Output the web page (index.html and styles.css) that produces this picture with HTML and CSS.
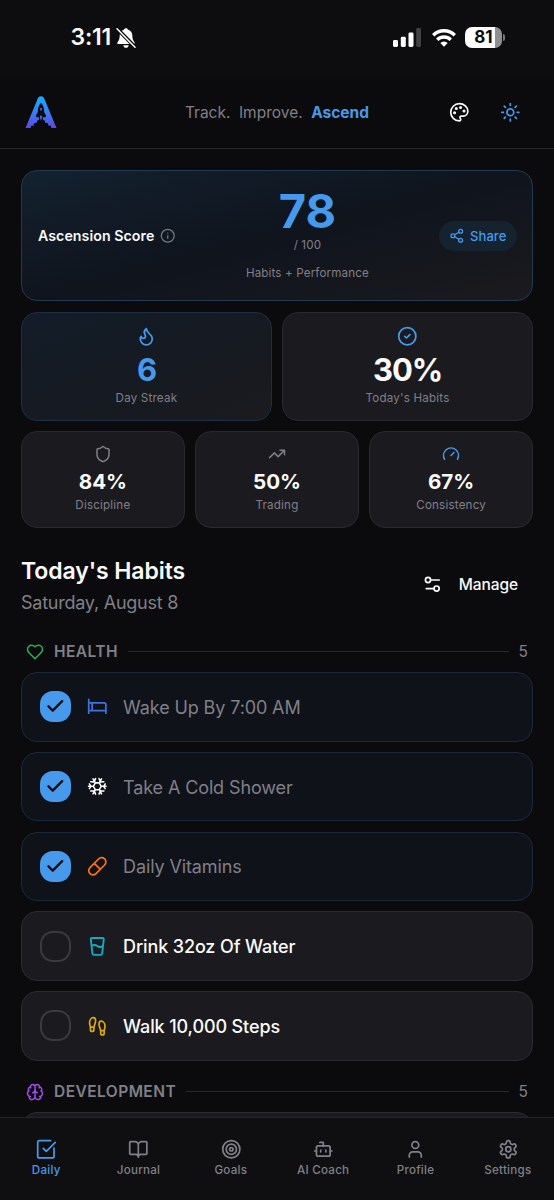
FILE: index.html
```html
<!DOCTYPE html>
<html lang="en">
<head>
<meta charset="utf-8">
<title>Ascend</title>
<link rel="stylesheet" href="styles.css">
</head>
<body>
<div class="app">
  <div class="status">
    <div class="status-left">
      <span class="clock">3:11</span>
      <svg class="bell" viewBox="0 0 20 22"><path fill="#fff" d="M10 1.200c.9 0 1.600.5 1.800 1.300C14.700 3.300 16.300 5.700 16.300 8.600c0 3.700.9 5 2 6.300.8.9.4 2.100-.9 2.100H2.600c-1.300 0-1.700-1.200-.9-2.100 1.100-1.300 2-2.600 2-6.300 0-2.900 1.600-5.300 4.500-6.100C8.400 1.700 9.100 1.200 10 1.200zM7.300 18.200h5.400c-.2 1.600-1.300 2.600-2.700 2.600s-2.500-1-2.700-2.600z"/><path stroke="#0c0c0e" stroke-width="3.800" d="M1 1.500l18 18.500"/><path stroke="#fff" stroke-width="1.500" stroke-linecap="round" d="M1 1.800l18 18.500"/></svg>
    </div>
    <div class="status-right">
      <svg class="signal" viewBox="0 0 28 19"><rect x="0" y="12" width="5" height="7" rx="1.400" fill="#fff"/><rect x="7.800" y="8.800" width="5" height="10.200" rx="1.400" fill="#fff"/><rect x="15.500" y="4.500" width="5" height="14.500" rx="1.400" fill="#fff"/><rect x="23.200" y="0" width="4.800" height="19" rx="1.400" fill="#414143"/></svg>
      <svg class="wifi" viewBox="0 0 24 19"><g fill="none" stroke="#fff" stroke-width="3.400"><path d="M1.200 7.200a15.500 15.500 0 0 1 21.600 0"/><path d="M5.200 11.800a9.800 9.800 0 0 1 13.600 0"/></g><path fill="#fff" d="M12 18.800l-3.700-3.700a5.300 5.300 0 0 1 7.400 0z"/></svg>
      <div class="battery"><span>81</span></div><i class="battery-cap"></i>
    </div>
  </div>

  <header class="header">
    <svg class="logo" viewBox="0 0 32 34"><defs><linearGradient id="lg" x1="0" y1="0" x2="0" y2="1"><stop offset="0" stop-color="#13b0fb"/><stop offset=".55" stop-color="#3d78f4"/><stop offset="1" stop-color="#5f48dc"/></linearGradient></defs><path fill="url(#lg)" d="M12.800 3.600C13.500 2 14.500 1.200 16 1.200s2.500.8 3.200 2.400L31.500 33h-5.200l-.5-2.200h-2.300l-.6-2.600-2.600-.4-.9-2.600-1.600-.4.200-2.600h2.600l.5-1.800-1.900-3.200c0-4-.9-6.800-3.200-9.400-2.300 2.600-3.200 5.400-3.200 9.400l-1.900 3.200.5 1.800H14l.2 2.600-1.600.4-.9 2.600-2.600.4-.6 2.600H6.200L5.700 33H.5z"/><path fill="#3d6ff0" d="M14.900 20.800h2.200l-.4 3.600h-1.400zM15.200 13h1.600v2.400h-1.600z"/></svg>
    <div class="tagline"><span>Track.</span><span>Improve.</span><b>Ascend</b></div>
    <div class="header-actions">
      <svg class="ic palette" viewBox="0 0 24 24"><circle cx="13.500" cy="6.500" r=".8" fill="currentColor"/><circle cx="17.500" cy="10.500" r=".8" fill="currentColor"/><circle cx="8.500" cy="7.500" r=".8" fill="currentColor"/><circle cx="6.500" cy="12.500" r=".8" fill="currentColor"/><path d="M12 2C6.500 2 2 6.500 2 12s4.500 10 10 10c.926 0 1.648-.746 1.648-1.688 0-.437-.18-.835-.437-1.125-.29-.289-.438-.652-.438-1.125a1.640 1.640 0 0 1 1.668-1.668h1.996c3.051 0 5.555-2.503 5.555-5.554C21.965 6.012 17.461 2 12 2z"/></svg>
      <svg class="ic sun" viewBox="0 0 24 24"><circle cx="12" cy="12" r="4"/><path d="M12 2v2M12 20v2M4.930 4.930l1.410 1.410M17.660 17.660l1.410 1.410M2 12h2M20 12h2M6.340 17.660l-1.410 1.410M19.070 4.930l-1.410 1.410"/></svg>
    </div>
  </header>

  <main class="main">
    <section class="hero">
      <div class="hero-title">Ascension Score<svg class="ic" viewBox="0 0 24 24"><circle cx="12" cy="12" r="10"/><path d="M12 16v-4M12 8h.01"/></svg></div>
      <div class="hero-score"><div class="score">78</div><div class="of">/ 100</div><div class="sub">Habits + Performance</div></div>
      <div class="hero-side"><div class="share"><svg class="ic" viewBox="0 0 24 24"><circle cx="18" cy="5" r="3"/><circle cx="6" cy="12" r="3"/><circle cx="18" cy="19" r="3"/><path d="M8.590 13.510l6.830 3.980M15.410 6.510l-6.820 3.980"/></svg>Share</div></div>
    </section>

    <div class="grid two">
      <div class="card streak"><svg class="ic" viewBox="0 0 24 24"><path d="M8.500 14.500A2.500 2.500 0 0 0 11 12c0-1.380-.5-2-1-3-1.072-2.143-.224-4.054 2-6 .5 2.500 2 4.900 4 6.500 2 1.600 3 3.500 3 5.500a7 7 0 1 1-14 0c0-1.153.433-2.294 1-3a2.500 2.500 0 0 0 2.500 2.500z"/></svg><strong>6</strong><span>Day Streak</span></div>
      <div class="card"><svg class="ic blue" viewBox="0 0 24 24"><circle cx="12" cy="12" r="10"/><path d="M9 12l2 2 4-4"/></svg><strong>30%</strong><span>Today's Habits</span></div>
    </div>
    <div class="grid three">
      <div class="card"><svg class="ic" viewBox="0 0 24 24"><path d="M20 13c0 5-3.500 7.500-7.660 8.950a1 1 0 0 1-.67-.01C7.500 20.500 4 18 4 13V6a1 1 0 0 1 1-1c2 0 4.500-1.200 6.240-2.720a1.170 1.170 0 0 1 1.520 0C14.510 3.810 17 5 19 5a1 1 0 0 1 1 1z"/></svg><strong>84%</strong><span>Discipline</span></div>
      <div class="card"><svg class="ic" viewBox="0 0 24 24"><path d="M22 7l-8.500 8.500-5-5L2 17M16 7h6v6"/></svg><strong>50%</strong><span>Trading</span></div>
      <div class="card"><svg class="ic blue" viewBox="0 0 24 24"><path d="M12 14l4-4M3.340 19a10 10 0 1 1 17.320 0"/></svg><strong>67%</strong><span>Consistency</span></div>
    </div>

    <div class="heading">
      <div><h1>Today's Habits</h1><p>Saturday, August 8</p></div>
      <div class="manage"><svg class="ic" viewBox="0 0 24 24"><path d="M20 7h-9M14 17H5"/><circle cx="17" cy="17" r="3"/><circle cx="7" cy="7" r="3"/></svg>Manage</div>
    </div>

    <div class="section"><svg class="ic green" viewBox="0 0 24 24"><path d="M19 14c1.490-1.460 3-3.210 3-5.500A5.500 5.500 0 0 0 16.500 3c-1.760 0-3 .5-4.500 2-1.500-1.500-2.740-2-4.500-2A5.500 5.500 0 0 0 2 8.500c0 2.300 1.500 4.050 3 5.500l7 7Z"/></svg><h2>HEALTH</h2><hr><em>5</em></div>

    <div class="habits">
      <div class="habit done"><div class="check"><svg class="ic" viewBox="0 0 24 24"><path d="M20 6L9 17l-5-5"/></svg></div><svg class="ic bed" viewBox="0 0 24 24"><path d="M2 4v16M2 8h18a2 2 0 0 1 2 2v10M2 17h20M6 8v9"/></svg><span>Wake Up By 7:00 AM</span></div>
      <div class="habit done"><div class="check"><svg class="ic" viewBox="0 0 24 24"><path d="M20 6L9 17l-5-5"/></svg></div><svg class="ic snow" viewBox="0 0 24 24"><path d="M9.700 8h4.600l2.300 4-2.300 4H9.700l-2.300-4zM9.700 8L7 3.300M14.300 8L17 3.300M16.600 12h5.600M14.300 16l2.700 4.700M9.700 16L7 20.700M7.400 12H1.800M4.300 6.600l4 .3M8.300 6.900L10 2.900M15.700 6.900L14 2.900M15.700 6.900l4-.3M4.600 12L2.800 9.200M4.600 12l-1.800 2.800M19.400 12l1.800-2.800M19.400 12l1.800 2.800M8.300 17.100l-4 .3M8.300 17.100L10 21.100M15.700 17.100L14 21.100M15.700 17.100l4 .3"/></svg><span>Take A Cold Shower</span></div>
      <div class="habit done"><div class="check"><svg class="ic" viewBox="0 0 24 24"><path d="M20 6L9 17l-5-5"/></svg></div><svg class="ic pill" viewBox="0 0 24 24"><path d="M10.500 20.500l10-10a4.950 4.950 0 1 0-7-7l-10 10a4.950 4.950 0 1 0 7 7ZM8.500 8.500l7 7"/></svg><span>Daily Vitamins</span></div>
      <div class="habit"><div class="check"></div><svg class="ic cup" viewBox="0 0 24 24"><path d="M5.116 4.104A1 1 0 0 1 6.110 3h11.780a1 1 0 0 1 .994 1.105L17.190 20.210A2 2 0 0 1 15.200 22H8.800a2 2 0 0 1-2-1.790zM6 12a5 5 0 0 1 6 0 5 5 0 0 0 6 0" transform="translate(-1.200 -.8) scale(1.100 1.040)"/></svg><span>Drink 32oz Of Water</span></div>
      <div class="habit"><div class="check"></div><svg class="ic feet" viewBox="0 0 24 24"><path d="M4 16v-2.380C4 11.500 2.970 10.500 3 8c.03-2.720 1.490-6 4.500-6C9.370 2 10 3.800 10 5.500c0 3.110-2 5.660-2 8.680V16a2 2 0 1 1-4 0ZM20 20v-2.380c0-2.120 1.030-3.120 1-5.620-.03-2.720-1.490-6-4.500-6C14.630 6 14 7.800 14 9.500c0 3.110 2 5.660 2 8.680V20a2 2 0 1 0 4 0ZM16 17h4M4 13h4"/></svg><span>Walk 10,000 Steps</span></div>
    </div>

    <div class="section dev"><svg class="ic purple" viewBox="0 0 24 24"><path d="M12 5a3 3 0 1 0-5.997.125 4 4 0 0 0-2.526 5.770 4 4 0 0 0 .556 6.588A4 4 0 1 0 12 18ZM12 5a3 3 0 1 1 5.997.125 4 4 0 0 1 2.526 5.770 4 4 0 0 1-.556 6.588A4 4 0 1 1 12 18ZM15 13a4.500 4.500 0 0 1-3-4 4.500 4.500 0 0 1-3 4M17.599 6.500a3 3 0 0 0 .399-1.375M6.003 5.125A3 3 0 0 0 6.401 6.500M3.477 10.896a4 4 0 0 1 .585-.396M19.938 10.500a4 4 0 0 1 .585.396M6 18a4 4 0 0 1-1.967-.516M19.967 17.484A4 4 0 0 1 18 18"/></svg><h2>DEVELOPMENT</h2><hr><em>5</em></div>
    <div class="habit next"></div>
  </main>

  <nav class="nav">
    <div class="tab active"><svg class="ic" viewBox="0 0 24 24"><path d="M21 10.500V20a2 2 0 0 1-2 2H4a2 2 0 0 1-2-2V4a2 2 0 0 1 2-2h13M8.500 11l3.500 3.500L22.500 4"/></svg>Daily</div>
    <div class="tab"><svg class="ic" viewBox="0 0 24 24"><path d="M12 7v14M3 18a1 1 0 0 1-1-1V4a1 1 0 0 1 1-1h5a4 4 0 0 1 4 4 4 4 0 0 1 4-4h5a1 1 0 0 1 1 1v13a1 1 0 0 1-1 1h-6a3 3 0 0 0-3 3 3 3 0 0 0-3-3z"/></svg>Journal</div>
    <div class="tab"><svg class="ic" viewBox="0 0 24 24"><circle cx="12" cy="12" r="10"/><circle cx="12" cy="12" r="6"/><circle cx="12" cy="12" r="2"/></svg>Goals</div>
    <div class="tab"><svg class="ic" viewBox="0 0 24 24"><path d="M12 8V4H8M2 14h2M20 14h2M15 13v2M9 13v2"/><rect x="4" y="8" width="16" height="12" rx="2"/></svg>AI Coach</div>
    <div class="tab"><svg class="ic" viewBox="0 0 24 24"><path d="M19 21v-2a4 4 0 0 0-4-4H9a4 4 0 0 0-4 4v2"/><circle cx="12" cy="7" r="4"/></svg>Profile</div>
    <div class="tab"><svg class="ic" viewBox="0 0 24 24"><path d="M12.220 2h-.44a2 2 0 0 0-2 2v.18a2 2 0 0 1-1 1.730l-.43.25a2 2 0 0 1-2 0l-.15-.08a2 2 0 0 0-2.730.73l-.22.38a2 2 0 0 0 .73 2.730l.15.1a2 2 0 0 1 1 1.720v.51a2 2 0 0 1-1 1.740l-.15.09a2 2 0 0 0-.73 2.730l.22.38a2 2 0 0 0 2.730.73l.15-.08a2 2 0 0 1 2 0l.43.25a2 2 0 0 1 1 1.730V20a2 2 0 0 0 2 2h.44a2 2 0 0 0 2-2v-.18a2 2 0 0 1 1-1.730l.43-.25a2 2 0 0 1 2 0l.15.08a2 2 0 0 0 2.730-.73l.22-.39a2 2 0 0 0-.73-2.730l-.15-.08a2 2 0 0 1-1-1.740v-.5a2 2 0 0 1 1-1.740l.15-.09a2 2 0 0 0 .73-2.730l-.22-.38a2 2 0 0 0-2.730-.73l-.15.08a2 2 0 0 1-2 0l-.43-.25a2 2 0 0 1-1-1.730V4a2 2 0 0 0-2-2z"/><circle cx="12" cy="12" r="3"/></svg>Settings</div>
  </nav>
</div>
</body>
</html>
```
FILE: styles.css
```css
* { box-sizing: border-box; }
body { margin: 0; background: #0b0b0d; color: #fafafa; font-family: Inter, "Liberation Sans", sans-serif; }
h1, h2, p, hr { margin: 0; }
.app { width: 554px; height: 1200px; overflow: hidden; display: grid; grid-template-rows: 76px 73px 967.500px 83.500px; }
.ic { display: block; flex: none; width: 20.600px; height: 20.600px; fill: none; stroke: currentColor; stroke-width: 2; stroke-linecap: round; stroke-linejoin: round; }
.blue { color: #4799eb; }

.status { background: #0d0d0f; display: flex; justify-content: space-between; padding: 0 49px 0 70.500px; }
.status-left, .status-right { display: flex; align-items: center; height: 73px; }
.clock { font-size: 23px; font-weight: 600; letter-spacing: -.2px; }
.bell { width: 20px; height: 22px; margin: 3px 0 0 5px; }
.signal { width: 28px; height: 19px; margin-top: 2px; }
.wifi { width: 24px; height: 19px; margin: 1px 9px 0 11px; }
.battery { width: 37px; height: 21px; border-radius: 7px; background: linear-gradient(90deg, #fff 30px, #8f8f91 30px); color: #0c0c0e; font-size: 17px; font-weight: 700; line-height: 21px; text-align: center; margin-top: 2px; }
.battery-cap { width: 2px; height: 7px; border-radius: 0 2px 2px 0; background: #77777a; margin: 2px 0 0 1px; }

.header { border-bottom: 1px solid #29292d; display: grid; grid-template-columns: 1fr auto 1fr; align-items: center; padding: 0 33px; }
.logo { width: 32px; height: 34px; margin-left: -8px; }
.tagline { display: flex; gap: 8.500px; font-size: 15.500px; color: #808088; letter-spacing: 0; }
.tagline b { color: #4799eb; font-weight: 700; }
.header-actions { display: flex; justify-content: flex-end; gap: 31px; }
.sun { color: #4799eb; }

.main { padding: 21px 21px 0; overflow: hidden; }
.hero { height: 131px; border: 1.300px solid #23394f; border-radius: 16px; background: linear-gradient(165deg, #13212f 0%, #0f141d 50%, #1b1a1e 100%); display: grid; grid-template-columns: auto 1fr auto; align-items: center; padding: 0 15px 0 16px; }
.hero-title { display: flex; align-items: center; gap: 6px; font-size: 14.200px; font-weight: 600; letter-spacing: .05px; white-space: nowrap; }
.hero-title .ic { width: 15.500px; height: 15.500px; color: #777780; }
.hero-score { text-align: center; color: #808088; font-size: 11.600px; letter-spacing: .15px; padding-bottom: 2px; }
.score { font-size: 47px; line-height: 46px; font-weight: 700; color: #4799eb; letter-spacing: 0; }
.of { line-height: 18px; margin-top: 2px; }
.sub { line-height: 18px; margin-top: 10px; }
.hero-side { display: flex; justify-content: flex-end; }
.share { display: flex; align-items: center; gap: 5px; height: 30px; border-radius: 15px; padding: 0 10.500px; background: #152331; color: #4799eb; font-size: 13px; font-weight: 500; letter-spacing: .1px; }
.share .ic { width: 15.500px; height: 15.500px; }

.grid { display: grid; gap: 10.400px; margin-top: 10.500px; }
.two { grid-template-columns: 1fr 1fr; }
.three { grid-template-columns: 1fr 1fr 1fr; }
.card { display: flex; flex-direction: column; align-items: center; border: 1.300px solid #29292e; border-radius: 16px; background: #1b1a1f; color: #808088; font-size: 11.600px; letter-spacing: .2px; height: 109px; padding-top: 13px; }
.card strong { color: #fafafa; font-size: 31px; font-weight: 700; line-height: 36px; letter-spacing: -1.100px; margin-top: 5.500px; }
.card span { line-height: 16px; margin-top: 2.500px; }
.card .blue { color: #4799eb; }
.streak { background: linear-gradient(155deg, #121c28, #161a22 55%, #1b1a1f); border-color: #1d2f42; }
.streak .ic, .card.streak strong { color: #4799eb; }
.three .card { height: 97px; }
.three .ic { width: 18px; height: 18px; }
.three strong { font-size: 20.600px; line-height: 26px; letter-spacing: 0; margin-top: 6px; }
.three span { margin-top: 2px; }

.heading { height: 60px; margin-top: 28px; display: flex; justify-content: space-between; }
h1 { font-size: 23px; font-weight: 600; line-height: 31px; letter-spacing: -.08px; }
p { font-size: 18px; line-height: 24px; margin-top: 4px; color: #808088; letter-spacing: -.24px; }
.manage { display: flex; align-items: center; gap: 16px; font-size: 15.500px; font-weight: 500; padding-right: 15px; height: 56px; letter-spacing: -.1px; }

.section { display: flex; align-items: center; height: 20px; margin-top: 25.500px; padding: 0 5px; color: #808088; }
.section .ic { width: 18px; height: 18px; }
.section .green { color: #29b15d; }
.section .purple { color: #9c4de6; }
h2 { font-size: 15.500px; font-weight: 600; letter-spacing: .45px; margin-left: 10px; }
hr { flex: 1; border: 0; height: 1px; background: #29292d; margin: 0 10px; }
em { font-style: normal; font-size: 15.500px; }
.habits { display: grid; gap: 10.300px; margin-top: 10.500px; }
.habit { display: flex; align-items: center; height: 69.500px; border: 1.300px solid #2b2b30; border-radius: 16px; background: #1b1a1f; padding-left: 17.500px; font-size: 18px; font-weight: 500; letter-spacing: -.12px; }
.habit > .ic { margin: 0 16px; }
.habit > span { padding-top: 1px; }
.done { background: #0f1219; border-color: #1b2a3b; color: #808088; font-weight: 400; }
.check { width: 31px; height: 31px; border-radius: 13px; border: 2.500px solid #3a3a3f; display: flex; align-items: center; justify-content: center; }
.done .check { border: 0; background: #4799eb; color: #0b0b0d; }
.check .ic { stroke-width: 2.700; }
.bed { color: #3b74df; }
.habit > .snow { color: #fff; stroke-width: 1.800; }
.pill { color: #f97316; }
.cup { color: #16aac0; }
.feet { color: #dba90f; }
.dev { margin-top: 21px; }
.next { margin-top: 10.500px; }

.nav { border-top: 1.500px solid #252529; background: #0f0f12; display: grid; grid-template-columns: repeat(6, 1fr); padding-top: 21px; }
.tab { display: flex; flex-direction: column; align-items: center; gap: 3px; color: #808088; font-size: 11.600px; font-weight: 500; line-height: 16px; letter-spacing: .25px; }
.active { color: #4799eb; }
```
